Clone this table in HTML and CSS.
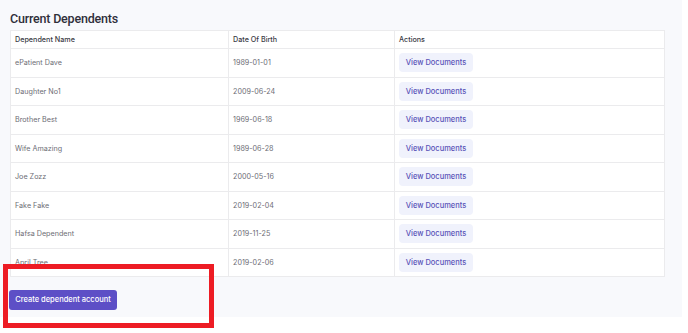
FILE: index.html
```html
<!DOCTYPE html>
<html lang="en">
<head>
    <meta charset="UTF-8">
    <meta name="viewport" content="width=device-width, initial-scale=1.0">
    <title>Current Dependents</title>
    <link rel="stylesheet" href="styles.css">
</head>
<body>

<div class="page">
    <h2 class="title">Current Dependents</h2>

    <table class="dependents">
        <thead>
            <tr>
                <th class="col-name">Dependent Name</th>
                <th class="col-dob">Date Of Birth</th>
                <th>Actions</th>
            </tr>
        </thead>
        <tbody>
            <tr><td>ePatient Dave</td><td>1989-01-01</td><td><button class="docs-button">View Documents</button></td></tr>
            <tr><td>Daughter No1</td><td>2009-06-24</td><td><button class="docs-button">View Documents</button></td></tr>
            <tr><td>Brother Best</td><td>1969-06-18</td><td><button class="docs-button">View Documents</button></td></tr>
            <tr><td>Wife Amazing</td><td>1989-06-28</td><td><button class="docs-button">View Documents</button></td></tr>
            <tr><td>Joe Zozz</td><td>2000-05-16</td><td><button class="docs-button">View Documents</button></td></tr>
            <tr><td>Fake Fake</td><td>2019-02-04</td><td><button class="docs-button">View Documents</button></td></tr>
            <tr><td>Hafsa Dependent</td><td>2019-11-25</td><td><button class="docs-button">View Documents</button></td></tr>
            <tr><td>April Tree</td><td>2019-02-06</td><td><button class="docs-button">View Documents</button></td></tr>
        </tbody>
    </table>

    <div class="actions">
        <button class="create-button">Create dependent account</button>
    </div>

    <!-- recuadro rojo de anotación -->
    <div class="highlight"></div>
</div>

</body>
</html>
```

FILE: styles.css
```css
html, body {
    margin: 0;
    height: 333px;
    background-color: #ffffff;
    font-family: Inter, "Noto Sans", sans-serif;
}
.page {
    position: relative;
    width: 682px;
    height: 317px;
    background-color: #f8f9fc;
    padding: 11px 0 0 10px;
    box-sizing: border-box;
}
.title {
    margin: 0 0 3px 0;
    font-family: Roboto, sans-serif;
    font-size: 12.5px;
    font-weight: 500;
    letter-spacing: -0.2px;
    color: #2f2f3a;
    line-height: 16px;
}
.dependents {
    width: 655px;
    border-collapse: collapse;
    background-color: #ffffff;
    border: 1px solid #e6e6e8;
}
.dependents th,
.dependents td {
    border: 1px solid #ebebed;
    padding: 0 4px;
    text-align: left;
    font-size: 7.2px;
}
.dependents th {
    height: 17px;
    font-weight: 500;
    color: #3a3a44;
}
.dependents td {
    height: 27.5px;
    color: #6d6d75;
}
.col-name {
    width: 209px;
}
.col-dob {
    width: 157px;
}
.docs-button {
    font-family: Inter, "Noto Sans", sans-serif;
    font-size: 7.5px;
    font-weight: 500;
    color: #5a52b8;
    background-color: #f0f2fc;
    border: none;
    border-radius: 4px;
    width: 74px;
    height: 19px;
    padding: 0;
    cursor: pointer;
}
.actions {
    margin-top: 9px;
}
.create-button {
    margin-left: -1px;
    font-family: Inter, "Noto Sans", sans-serif;
    font-size: 7.5px;
    font-weight: 500;
    white-space: nowrap;
    color: #ffffff;
    background-color: #5d4fc6;
    border: none;
    border-radius: 3px;
    width: 108px;
    height: 20px;
    padding: 0;
    cursor: pointer;
}
.highlight {
    position: absolute;
    left: 3px;
    top: 264px;
    width: 211px;
    height: 64px;
    border: 5px solid #ed1c24;
    box-sizing: border-box;
}
```
